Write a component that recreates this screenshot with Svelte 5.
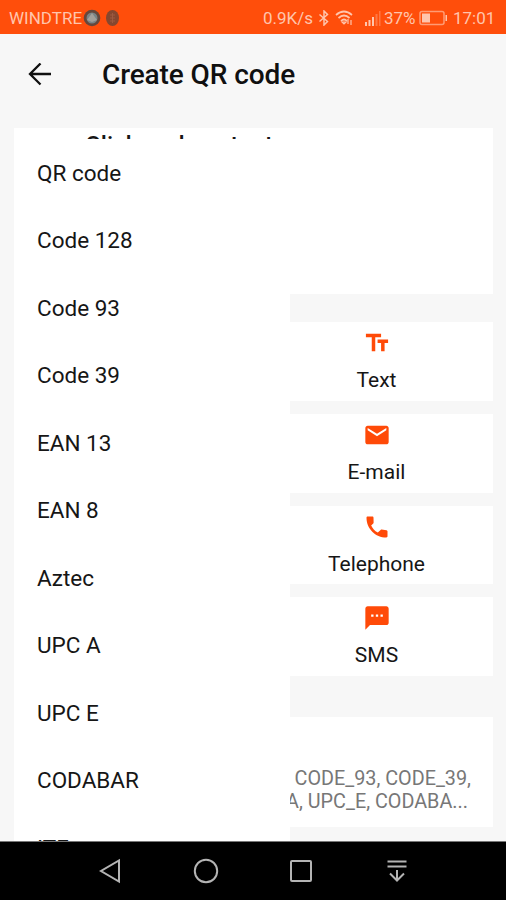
<script>
	const formats = [
		'QR code',
		'Code 128',
		'Code 93',
		'Code 39',
		'EAN 13',
		'EAN 8',
		'Aztec',
		'UPC A',
		'UPC E',
		'CODABAR',
		'ITF'
	];

	const types = [
		{
			label: 'Text',
			icon: 'M2.5 4v3h5v12h3V7h5V4h-13zm19 5h-9v3h3v7h3v-7h3V9z'
		},
		{
			label: 'E-mail',
			icon: 'M20 4H4c-1.1 0-1.99.9-1.99 2L2 18c0 1.1.9 2 2 2h16c1.1 0 2-.9 2-2V6c0-1.1-.9-2-2-2zm0 4l-8 5-8-5V6l8 5 8-5v2z'
		},
		{
			label: 'Telephone',
			icon: 'M8 3H4c-.6 0-1 .4-1 1 0 9.400 7.600 17 17 17 .6 0 1-.4 1-1v-4.300c0-.5-.3-.9-.8-1l-4.300-.5c-.3 0-.6.1-.8.3l-2.400 2.300C9.900 15.400 8.200 13.300 7 10.800l1.800-1.800c.2-.2.3-.5.3-.8L9 4c0-.6-.4-1-1-1z'
		},
		{
			label: 'SMS',
			icon: 'M20 2H4c-1.1 0-1.99.9-1.99 2L2 22l4-4h14c1.1 0 2-.9 2-2V4c0-1.1-.9-2-2-2zM9 11H7V9h2v2zm4 0h-2V9h2v2zm4 0h-2V9h2v2z'
		}
	];
</script>

<div class="screen">
	<div class="status">
		<span class="carrier">WINDTRE</span>
		<svg class="notices" viewBox="0 0 38 18" aria-hidden="true">
			<circle cx="9" cy="9" r="8.3" fill="#66473c" />
			<circle cx="9" cy="9" r="5.5" fill="#788486" />
			<path d="M9 4l5 7-5 2-5-2z" fill="#a2a09b" />
			<ellipse cx="29.5" cy="9" rx="6.5" ry="8" fill="#85472f" />
			<path d="M27 6h5M27 9h5M27 12h5M29.5 4v10" stroke="#9c5a40" fill="none" />
		</svg>
		<span class="speed">0.9K/s</span>
		<svg class="bluetooth" viewBox="0 0 12 16" fill="none" stroke="currentColor" stroke-width="1.5" aria-hidden="true">
			<path d="M1.5 4.500l8 7L6 15V1l3.500 3.500-8 7" />
		</svg>
		<svg class="wifi" viewBox="0 0 18 15" fill="none" stroke="currentColor" stroke-width="1.7" aria-hidden="true">
			<path d="M1 5q8-7 16 0M3.500 8q5.500-5 11 0M6 11q3-3 6 0" />
			<path d="M7 12h4l-2 2zM13 9v5M16 10v5" stroke-width="1.2" />
		</svg>
		<svg class="signal" viewBox="0 0 16 16" fill="currentColor" aria-hidden="true">
			<path d="M0 12h2v4H0zM3.500 10h2v6h-2zM7 7h2v9H7z" />
			<path d="M10.500 4h2v12h-2zM14 1h1.500v15H14z" opacity=".35" />
		</svg>
		<span class="percent">37%</span>
		<svg class="battery" viewBox="0 0 29 16" aria-hidden="true">
			<rect x="1" y="1.5" width="24" height="13" rx="2" fill="none" stroke="currentColor" stroke-width="1.5" opacity=".65" />
			<path d="M3 3.500h8v9H3zM26.500 5H28v6h-1.500z" fill="currentColor" />
		</svg>
		<span class="clock">17:01</span>
	</div>

	<header>
		<svg viewBox="0 0 24 24" fill="none" stroke="currentColor" stroke-width="2.3" aria-hidden="true">
			<path d="M23 11H2M12.500.500L2 11l10.500 10.500" />
		</svg>
		<h1>Create QR code</h1>
	</header>

	<main>
		<section class="card intro">
			<p>Click and content</p>
		</section>

		<section class="types">
			{#each types as type}
				<button type="button" class="card">
					<svg viewBox="0 0 24 24" fill="currentColor" aria-hidden="true"><path d={type.icon} /></svg>
					<span>{type.label}</span>
				</button>
			{/each}
		</section>

		<section class="card supported">
			<span>CODE_93, CODE_39,</span>
			<span class="last">UPC_A, UPC_E, CODABA...</span>
		</section>

		<ul class="menu">
			{#each formats as format}
				<li>{format}</li>
			{/each}
		</ul>
	</main>

	<nav>
		<svg viewBox="0 0 26 26" aria-hidden="true"><path d="M22 2.500v21L4 13z" /></svg>
		<svg viewBox="0 0 26 26" aria-hidden="true"><circle cx="13" cy="13" r="11.2" /></svg>
		<svg viewBox="0 0 26 26" aria-hidden="true"><rect x="3" y="3" width="20" height="20" rx="1" /></svg>
		<svg viewBox="0 0 26 26" aria-hidden="true">
			<path d="M3.500 3.500h19M3.500 8.500h19M13 12v10.500M6 15.500l7 7 7-7" />
		</svg>
	</nav>
</div>

<style>
	:global(body) {
		margin: 0;
	}
	.screen {
		display: flex;
		flex-direction: column;
		width: 506px;
		height: 900px;
		overflow: hidden;
		background: #f7f7f7;
		color: #161616;
		font-family: Roboto, sans-serif;
	}
	.status {
		display: flex;
		flex: none;
		align-items: center;
		height: 34px;
		box-sizing: border-box;
		padding: 1px 11px 0 9px;
		background: #ff4e0b;
		color: #ffc5ad;
		font-size: 17px;
		white-space: nowrap;
	}
	.status svg {
		flex: none;
	}
	.carrier {
		width: 74px;
	}
	.notices {
		width: 38px;
		height: 18px;
	}
	.speed {
		width: 51px;
		margin-left: auto;
	}
	.bluetooth {
		width: 12px;
		height: 16px;
		margin-left: 4px;
	}
	.wifi {
		width: 18px;
		height: 15px;
		margin-left: 5px;
	}
	.signal {
		width: 16px;
		height: 16px;
		margin-left: 12px;
	}
	.percent {
		width: 32px;
		margin-left: 3px;
	}
	.battery {
		width: 29px;
		height: 16px;
		margin-left: 3px;
	}
	.clock {
		width: 42px;
		margin-left: 5px;
	}
	header {
		display: flex;
		flex: none;
		align-items: center;
		height: 94px;
		box-sizing: border-box;
		padding: 0 28px 13px;
		color: #101010;
	}
	header svg {
		width: 24px;
		height: 24px;
	}
	h1 {
		margin: 0 0 0 50px;
		font-size: 28px;
		font-weight: 500;
		letter-spacing: -0.1px;
	}
	main {
		position: relative;
		display: flex;
		flex: 1;
		flex-direction: column;
		min-height: 0;
		overflow: hidden;
		padding: 0 13px 0 14px;
	}
	.card {
		flex: none;
		box-sizing: border-box;
		border: 0;
		background: #fff;
	}
	.intro {
		height: 166px;
		padding: 4px 71px;
	}
	.intro p {
		margin: 0;
		font-size: 24px;
		font-weight: 500;
		letter-spacing: 0.1px;
		line-height: 27px;
	}
	.types {
		display: flex;
		flex-direction: column;
		align-items: flex-end;
		gap: 13px;
		margin: 28px 0 41px;
	}
	.types .card {
		display: flex;
		flex-direction: column;
		align-items: center;
		width: 233px;
		height: 78.8px;
		padding: 7px 0 0;
		color: #161616;
		font-family: inherit;
	}
	.types svg {
		width: 28px;
		height: 28px;
		color: #ff4a08;
	}
	.types span {
		margin-top: 10px;
		font-size: 21px;
		line-height: 26px;
	}
	.supported {
		display: flex;
		flex-direction: column;
		align-items: flex-end;
		height: 110px;
		padding: 50px 22px 0;
		color: #777;
		font-size: 19.8px;
		line-height: 23px;
	}
	.supported .last {
		margin-right: 3px;
	}
	.menu {
		position: absolute;
		top: 11px;
		bottom: 0;
		left: 14px;
		width: 276px;
		box-sizing: border-box;
		margin: 0;
		overflow: hidden;
		padding: 0;
		background: #fff;
		list-style: none;
	}
	.menu li {
		display: flex;
		align-items: center;
		height: 67.5px;
		padding: 0 23px;
		font-size: 22.5px;
	}
	nav {
		display: flex;
		flex: none;
		align-items: center;
		justify-content: center;
		gap: 69.6px;
		height: 59px;
		box-sizing: border-box;
		padding-left: 1px;
		border-top: 1px solid #777;
		background: #000;
	}
	nav svg {
		width: 26px;
		height: 26px;
		fill: none;
		stroke: #b4b4b4;
		stroke-width: 2;
	}
</style>
